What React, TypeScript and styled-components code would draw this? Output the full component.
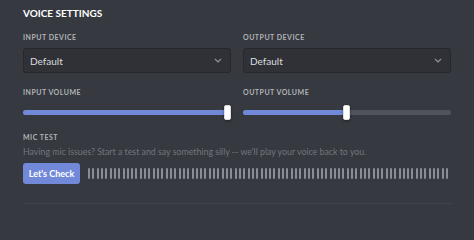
import React from 'react'
import styled, { createGlobalStyle } from 'styled-components'

const GlobalStyle = createGlobalStyle`
  html, body {
    margin: 0;
    padding: 0;
    background: #36393f;
  }
  body {
    font-family: 'Lato', 'Open Sans', sans-serif;
    -webkit-font-smoothing: antialiased;
  }
`

const Page = styled.div`
  width: 474px;
  height: 216px;
  box-sizing: border-box;
  padding: 6px 23px 0 23px;
  background: #36393f;
  overflow: hidden;
`

const Title = styled.h2`
  margin: 0;
  font-size: 10px;
  line-height: 14px;
  font-weight: 700;
  color: #ffffff;
  text-transform: uppercase;
`

const Columns = styled.div`
  display: grid;
  grid-template-columns: 208px 208px;
  column-gap: 12px;
  margin-top: 13px;
`

const Column = styled.div`
  display: flex;
  flex-direction: column;
`

const Label = styled.div<{ $gap?: number }>`
  font-size: 7px;
  line-height: 9px;
  font-weight: 700;
  letter-spacing: 0.5px;
  color: #b0b3b8;
  text-transform: uppercase;
  margin-bottom: ${(p) => p.$gap ?? 6}px;
`

const Select = styled.div`
  height: 25px;
  box-sizing: border-box;
  display: flex;
  align-items: center;
  justify-content: space-between;
  padding: 0 8px 0 6px;
  background: #2f3136;
  border: 1px solid #26282c;
  border-radius: 3px;
  color: #dcddde;
  font-size: 10px;
  margin-bottom: 15px;
`

const Chevron = () => (
  <svg width='8' height='5' viewBox='0 0 8 5'>
    <path d='M1 1 L4 4 L7 1' fill='none' stroke='#8e9297' strokeWidth='1.2' />
  </svg>
)

const SliderTrack = styled.div`
  position: relative;
  height: 5px;
  margin-top: 13px;
  border-radius: 3px;
  background: #4f545c;
`

const SliderFill = styled.div`
  height: 100%;
  border-radius: 3px;
  background: #7289da;
`

const Thumb = styled.div`
  position: absolute;
  top: -5px;
  width: 7px;
  height: 15px;
  margin-left: -3.5px;
  box-sizing: border-box;
  border-radius: 2px;
  background: #ffffff;
  border: 1px solid #dcddde;
  box-shadow: 0 1px 3px rgba(0, 0, 0, 0.4);
`

const Slider = ({ value }: { value: number }) => (
  <SliderTrack>
    <SliderFill style={{ width: `${value}%` }} />
    <Thumb style={{ left: `${value}%` }} />
  </SliderTrack>
)

const MicSection = styled.div`
  margin-top: 18px;
`

const Description = styled.div`
  margin-top: 4px;
  font-size: 8.8px;
  line-height: 12px;
  color: #72767d;
`

const TestRow = styled.div`
  display: flex;
  align-items: center;
  margin-top: 5px;
  gap: 8px;
`

const Button = styled.button`
  width: 57px;
  height: 21px;
  padding: 0;
  border: none;
  border-radius: 3px;
  background: #7289da;
  color: #ffffff;
  font-family: inherit;
  font-size: 9px;
  font-weight: 700;
`

const Meter = styled.div`
  flex: 1;
  height: 11px;
  display: flex;
  justify-content: space-between;
  margin-right: 2px;
`

const MeterBar = styled.div`
  width: 2px;
  height: 100%;
  border-radius: 1px;
  background: #8a8d93;
`

const Divider = styled.div`
  height: 1px;
  margin-top: 19px;
  background: #42454b;
`

const bars = Array.from({ length: 84 }, (_, i) => i)

export default function App() {
  return (
    <Page>
      <GlobalStyle />
      <Title>Voice Settings</Title>
      <Columns>
        <Column>
          <Label>Input Device</Label>
          <Select>
            <span>Default</span>
            <Chevron />
          </Select>
          <Label $gap={0}>Input Volume</Label>
          <Slider value={98.3} />
        </Column>
        <Column>
          <Label>Output Device</Label>
          <Select>
            <span>Default</span>
            <Chevron />
          </Select>
          <Label $gap={0}>Output Volume</Label>
          <Slider value={49.8} />
        </Column>
      </Columns>
      <MicSection>
        <Label $gap={0}>Mic Test</Label>
        <Description>
          Having mic issues? Start a test and say something silly -- we'll play your voice back to
          you.
        </Description>
        <TestRow>
          <Button>Let's Check</Button>
          <Meter>
            {bars.map((i) => (
              <MeterBar key={i} />
            ))}
          </Meter>
        </TestRow>
      </MicSection>
      <Divider />
    </Page>
  )
}
